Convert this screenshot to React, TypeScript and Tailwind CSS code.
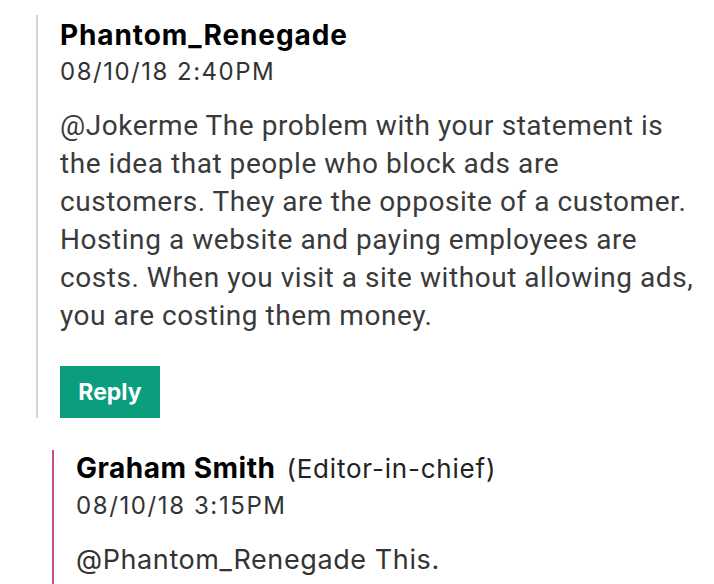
const bodyLines = [
  '@Jokerme The problem with your statement is',
  'the idea that people who block ads are',
  'customers. They are the opposite of a customer.',
  'Hosting a website and paying employees are',
  'costs. When you visit a site without allowing ads,',
  'you are costing them money.',
]

export default function App() {
  return (
    <div className="min-h-screen bg-white pl-[36px] pt-[15px]">
      {/* parent comment */}
      <div className="border-l-2 border-[#d6d6d6] pl-[22px] pt-[3px] w-[670px]">
        <div className="font-['Inter',sans-serif] text-[28px] font-bold leading-[34px] tracking-[0.9px] text-black">
          Phantom_Renegade
        </div>
        <div className="mt-[5px] font-['Inter',sans-serif] text-[24px] leading-[30px] tracking-[1.5px] text-[#333]">
          08/10/18 2:40PM
        </div>
        <p className="mt-[20px] font-['Roboto',sans-serif] text-[28px] leading-[38px] tracking-[0.55px] text-[#3a3a3a]">
          {bodyLines.map((line) => (
            <span key={line} className="block whitespace-nowrap">
              {line}
            </span>
          ))}
        </p>
        <button className="mt-[31px] block h-[52px] w-[100px] bg-[#0a9e7c] font-['Inter',sans-serif] text-[23px] font-bold text-white">
          Reply
        </button>
      </div>

      {/* reply */}
      <div className="ml-[16px] mt-[32px] border-l-2 border-[#c4508c] pl-[22px] pt-[1px] pb-[10px]">
        <div className="flex items-baseline gap-[11px]">
          <span className="font-['Inter',sans-serif] text-[28px] font-bold leading-[34px] tracking-[0.5px] text-black">
            Graham Smith
          </span>
          <span className="font-['Inter',sans-serif] text-[26px] leading-[34px] tracking-[0.8px] text-[#222]">
            (Editor-in-chief)
          </span>
        </div>
        <div className="mt-[5px] font-['Inter',sans-serif] text-[24px] leading-[30px] tracking-[1.6px] text-[#333]">
          08/10/18 3:15PM
        </div>
        <p className="mt-[20px] font-['Inter',sans-serif] text-[27px] leading-[38px] tracking-[0.6px] text-[#333]">
          @Phantom_Renegade This.
        </p>
      </div>
    </div>
  )
}
